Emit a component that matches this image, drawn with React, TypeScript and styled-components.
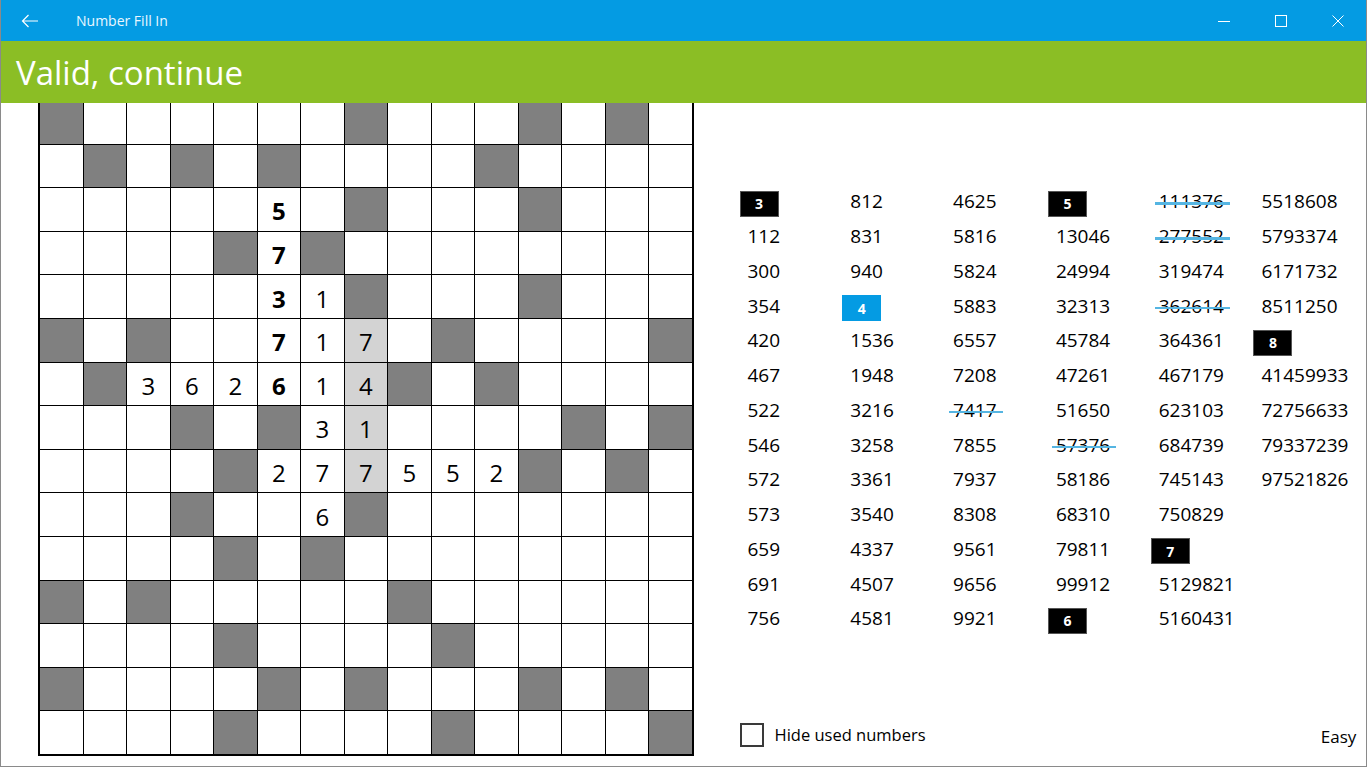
import React from 'react';
import styled, { createGlobalStyle } from 'styled-components';

const GlobalStyle = createGlobalStyle`
  html, body {
    margin: 0;
    padding: 0;
    background: #ffffff;
  }
  body {
    font-family: 'Open Sans', 'Noto Sans', sans-serif;
    color: #000;
  }
`;

const Window = styled.div`
  width: 1367px;
  height: 767px;
  box-sizing: border-box;
  border: 1px solid #8a8a8a;
  border-top: none;
  display: flex;
  flex-direction: column;
  overflow: hidden;
  background: #fff;
`;

const TitleBar = styled.div`
  height: 41px;
  flex: none;
  background: #049be3;
  display: flex;
  align-items: center;
  color: #fff;
  position: relative;
  z-index: 1;
`;

const BackButton = styled.div`
  width: 58px;
  height: 41px;
  display: flex;
  align-items: center;
  justify-content: center;
`;

const AppTitle = styled.span`
  margin-left: 17px;
  font-size: 14px;
  color: #eaf7ff;
`;

const Controls = styled.div`
  margin-left: auto;
  display: flex;
  height: 41px;
`;

const ControlButton = styled.div`
  width: 57px;
  height: 41px;
  display: flex;
  align-items: center;
  justify-content: center;
`;

const Banner = styled.div`
  height: 62px;
  flex: none;
  background: #8bbe25;
  color: #fff;
  display: flex;
  align-items: center;
  padding-left: 15px;
  font-size: 33px;
  position: relative;
  z-index: 1;
`;

const Content = styled.div`
  flex: 1;
  min-height: 0;
  display: flex;
`;

const BoardArea = styled.div`
  padding-left: 37px;
`;

const Board = styled.div`
  margin-top: -2px;
  display: grid;
  grid-template-columns: repeat(15, 43.5px);
  grid-template-rows: repeat(15, 43.6px);
  border-left: 2px solid #000;
  border-right: 1px solid #000;
  border-bottom: 1px solid #000;
`;

type CellKind = 'empty' | 'block' | 'given' | 'entry' | 'active';

const Cell = styled.div<{ $kind: CellKind }>`
  box-sizing: border-box;
  border-right: 1px solid #000;
  border-bottom: 1px solid #000;
  padding-top: 3px;
  display: flex;
  align-items: center;
  justify-content: center;
  font-size: 24px;
  font-weight: ${(p) => (p.$kind === 'given' ? 700 : 400)};
  background: ${(p) =>
    p.$kind === 'block' ? '#808080' : p.$kind === 'active' ? '#d3d3d3' : '#ffffff'};
`;

const SidePanel = styled.div`
  flex: 1;
  display: flex;
  flex-direction: column;
  padding: 81px 11px 18px 46px;
`;

const NumberList = styled.div`
  display: grid;
  grid-auto-flow: column;
  grid-template-rows: repeat(13, 34.75px);
  grid-auto-columns: 102.8px;
`;

const Item = styled.div<{ $badge?: boolean }>`
  display: flex;
  align-items: center;
  padding-left: ${(p) => (p.$badge ? 0 : 8)}px;
  font-size: 19px;
`;

const Badge = styled.div<{ $active?: boolean }>`
  width: 39px;
  height: 26px;
  box-sizing: border-box;
  margin-top: 5px;
  background: ${(p) => (p.$active ? '#049be3' : '#000')};
  border: 1px solid ${(p) => (p.$active ? '#049be3' : '#555')};
  color: #fff;
  font-weight: 700;
  font-size: 14px;
  display: flex;
  align-items: center;
  justify-content: center;
`;

const Used = styled.span`
  position: relative;
  &::after {
    content: '';
    position: absolute;
    left: -4px;
    right: -6px;
    top: calc(50% + 1px);
    height: 2.5px;
    background: #55b5e2;
  }
`;

const Footer = styled.div`
  margin-top: auto;
  display: flex;
  justify-content: space-between;
  align-items: center;
`;

const CheckRow = styled.label`
  display: flex;
  align-items: center;
  gap: 11px;
  font-size: 16.5px;
`;

const CheckBox = styled.span`
  width: 24px;
  height: 24px;
  box-sizing: border-box;
  border: 2px solid #3a3a3a;
`;

const Level = styled.span`
  font-size: 17px;
  margin-top: 4px;
`;

const ROWS = [
  '# . . . . . . # . . . # . # .',
  '. # . # . # . . . . # . . . .',
  '. . . . . *5 . # . . . # . . .',
  '. . . . # *7 # . . . . . . . .',
  '. . . . . *3 1 # . . . # . . .',
  '# . # . . *7 1 ~7 . # . . . . #',
  '. # 3 6 2 *6 1 ~4 # . # . . . .',
  '. . . # . # 3 ~1 . . . . # . #',
  '. . . . # 2 7 ~7 5 5 2 # . # .',
  '. . . # . . 6 # . . . . . . .',
  '. . . . # . # . . . . . . . .',
  '# . # . . . . . # . . . . . .',
  '. . . . # . . . . # . . . . .',
  '# . . . . # . # . . . # . # .',
  '. . . . # . . . . # . . . . #',
];

const parseCell = (token: string): { kind: CellKind; value: string } => {
  if (token === '#') return { kind: 'block', value: '' };
  if (token === '.') return { kind: 'empty', value: '' };
  if (token[0] === '*') return { kind: 'given', value: token.slice(1) };
  if (token[0] === '~') return { kind: 'active', value: token.slice(1) };
  return { kind: 'entry', value: token };
};

// "[n]" is a length header, "-x" a number already placed in the grid
const NUMBERS = [
  '[3]', '112', '300', '354', '420', '467', '522', '546', '572', '573', '659', '691', '756',
  '812', '831', '940', '[4]!', '1536', '1948', '3216', '3258', '3361', '3540', '4337', '4507', '4581',
  '4625', '5816', '5824', '5883', '6557', '7208', '-7417', '7855', '7937', '8308', '9561', '9656', '9921',
  '[5]', '13046', '24994', '32313', '45784', '47261', '51650', '-57376', '58186', '68310', '79811', '99912', '[6]',
  '-111376', '-277552', '319474', '-362614', '364361', '467179', '623103', '684739', '745143', '750829', '[7]', '5129821', '5160431',
  '5518608', '5793374', '6171732', '8511250', '[8]', '41459933', '72756633', '79337239', '97521826',
];

const BackArrow = () => (
  <svg width="18" height="14" viewBox="0 0 18 14" fill="none" stroke="#fff" strokeWidth="1.2">
    <path d="M17 7H1.5M7.5 1L1.5 7l6 6" />
  </svg>
);

const Minimize = () => (
  <svg width="12" height="12" viewBox="0 0 12 12" fill="none" stroke="#fff" strokeWidth="1">
    <path d="M0 6.5h12" />
  </svg>
);

const Maximize = () => (
  <svg width="12" height="12" viewBox="0 0 12 12" fill="none" stroke="#fff" strokeWidth="1">
    <rect x="0.5" y="0.5" width="11" height="11" />
  </svg>
);

const Close = () => (
  <svg width="12" height="12" viewBox="0 0 12 12" fill="none" stroke="#fff" strokeWidth="1">
    <path d="M0.5 0.5l11 11M11.5 0.5l-11 11" />
  </svg>
);

const App: React.FC = () => {
  return (
    <Window>
      <GlobalStyle />
      <TitleBar>
        <BackButton>
          <BackArrow />
        </BackButton>
        <AppTitle>Number Fill In</AppTitle>
        <Controls>
          <ControlButton><Minimize /></ControlButton>
          <ControlButton><Maximize /></ControlButton>
          <ControlButton><Close /></ControlButton>
        </Controls>
      </TitleBar>
      <Banner>Valid, continue</Banner>
      <Content>
        <BoardArea>
          <Board>
            {ROWS.flatMap((row, r) =>
              row.split(' ').map((token, c) => {
                const cell = parseCell(token);
                return (
                  <Cell key={`${r}-${c}`} $kind={cell.kind}>
                    {cell.value}
                  </Cell>
                );
              })
            )}
          </Board>
        </BoardArea>
        <SidePanel>
          <NumberList>
            {NUMBERS.map((n, i) => {
              if (n.startsWith('[')) {
                const len = n.slice(1, n.indexOf(']'));
                return (
                  <Item key={i} $badge>
                    <Badge $active={n.endsWith('!')}>{len}</Badge>
                  </Item>
                );
              }
              if (n.startsWith('-')) {
                return (
                  <Item key={i}>
                    <Used>{n.slice(1)}</Used>
                  </Item>
                );
              }
              return <Item key={i}>{n}</Item>;
            })}
          </NumberList>
          <Footer>
            <CheckRow>
              <CheckBox />
              Hide used numbers
            </CheckRow>
            <Level>Easy</Level>
          </Footer>
        </SidePanel>
      </Content>
    </Window>
  );
};

export default App;
